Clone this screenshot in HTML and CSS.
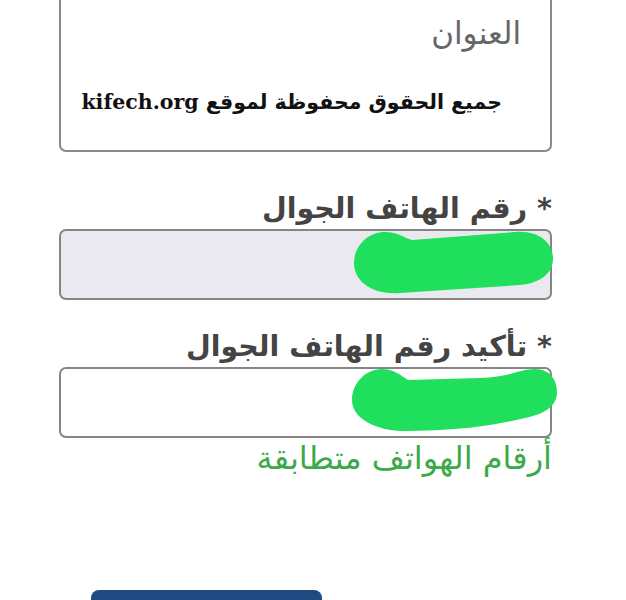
FILE: index.html
```html
<!DOCTYPE html>
<html lang="ar" dir="rtl">
<head>
    <meta charset="UTF-8">
    <meta name="viewport" content="width=device-width, initial-scale=1.0">
    <title>نموذج</title>
    <link rel="stylesheet" href="styles.css">
</head>
<body>

    <div class="container">
        <div class="address-box">
            <div class="placeholder">العنوان</div>
            <div class="rights">جميع الحقوق محفوظة لموقع <span class="site">kifech.org</span></div>
        </div>

        <label class="field-label first" for="phone">* رقم الهاتف الجوال</label>
        <div class="input-wrap">
            <input type="text" id="phone" class="field disabled" readonly>
            <svg class="scribble" viewBox="59 229 493 71" width="493" height="71">
                <path d="M 385 232 C 398 232 404 238 412 240 L 515 232 C 540 230 553 244 553 258 C 553 274 540 283 520 285 L 400 293 C 370 295 354 280 354 263 C 354 246 368 232 385 232 Z"/>
            </svg>
        </div>

        <label class="field-label" for="phone2">* تأكيد رقم الهاتف الجوال</label>
        <div class="input-wrap">
            <input type="text" id="phone2" class="field">
            <svg class="scribble" viewBox="59 367 493 71" width="493" height="71">
                <path d="M 382 369 C 394 369 400 375 408 380 L 480 378 C 510 377 520 369 535 369 C 550 369 557 380 557 392 C 557 406 545 414 525 418 C 495 425 470 430 410 431 C 375 432 352 418 352 400 C 352 383 366 369 382 369 Z"/>
            </svg>
        </div>
        <p class="match">أرقام الهواتف متطابقة</p>

        <div class="actions">
            <button type="button" class="btn"></button>
        </div>
    </div>

</body>
</html>
```

FILE: styles.css
```css
body {
    margin: 0;
    background-color: #ffffff;
    font-family: "DejaVu Sans", sans-serif;
    color: #444;
    overflow: hidden;
}
.container {
    width: 493px;
    margin-right: 74px;
    display: flex;
    flex-direction: column;
}
.address-box {
    margin-top: -20px;
    height: 172px;
    border: 2px solid #8a8a8a;
    border-radius: 7px;
    padding: 0 29px 0 0;
    box-sizing: border-box;
    display: flex;
    flex-direction: column;
}
.placeholder {
    margin-top: 30px;
    font-size: 31px;
    color: #666;
    line-height: 42px;
}
.rights {
    margin-top: 31px;
    padding-right: 19px;
    font-family: "DejaVu Serif", "DejaVu Sans", serif;
    font-weight: bold;
    font-size: 20.5px;
    color: #111;
    line-height: 34px;
    white-space: nowrap;
}
.site {
    font-family: "DejaVu Serif", serif;
}
.field-label {
    display: block;
    margin-top: 27px;
    font-size: 28.5px;
    font-weight: bold;
    color: #444;
    line-height: 40px;
}
.field-label.first {
    margin-top: 37px;
}
.input-wrap {
    position: relative;
    height: 71px;
}
.field {
    width: 100%;
    height: 71px;
    box-sizing: border-box;
    border: 2px solid #858585;
    border-radius: 7px;
    background-color: #fff;
    font-size: 22px;
}
.field.disabled {
    background-color: #e9e9ef;
}
.scribble {
    position: absolute;
    left: 0;
    top: 0;
    overflow: visible;
    pointer-events: none;
}
.scribble path {
    fill: #1fdf5c;
}
.match {
    margin: 2px 0 0;
    font-size: 32px;
    color: #3daa4a;
    line-height: 36px;
}
.actions {
    display: flex;
    justify-content: flex-end;
    margin-top: 114px;
}
.btn {
    width: 231px;
    height: 40px;
    margin-left: 32px;
    border: none;
    border-radius: 8px;
    background-color: #1f4a82;
}
```
